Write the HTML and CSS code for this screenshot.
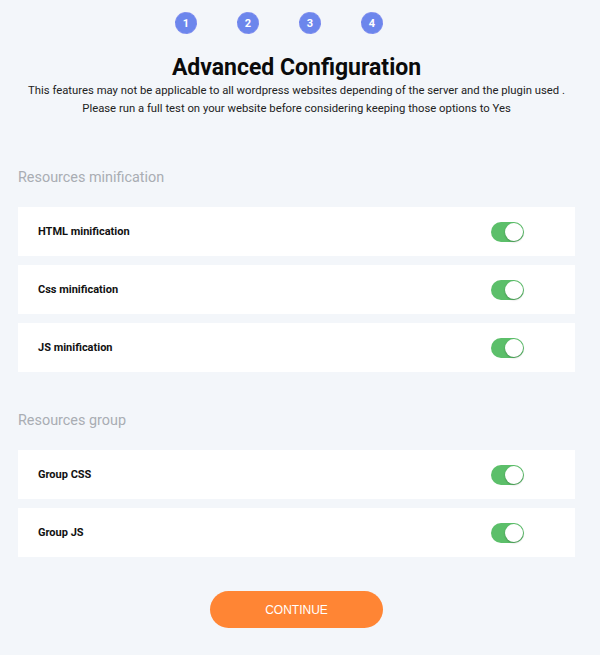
FILE: index.html
```html
<!DOCTYPE html>
<html>
<head>
<meta charset="utf-8">
<link rel="stylesheet" href="styles.css">
</head>
<body>
<div class="page">
  <div class="steps">
    <span class="step">1</span>
    <span class="step">2</span>
    <span class="step">3</span>
    <span class="step">4</span>
  </div>
  <h1 class="title">Advanced Configuration</h1>
  <p class="desc">This features may not be applicable to all wordpress websites depending of the server and the plugin used .</p>
  <p class="desc">Please run a full test on your website before considering keeping those options to Yes</p>

  <h2 class="section">Resources minification</h2>
  <div class="list">
    <div class="card"><span class="label">HTML minification</span><span class="toggle"><span class="knob"></span></span></div>
    <div class="card"><span class="label">Css minification</span><span class="toggle"><span class="knob"></span></span></div>
    <div class="card"><span class="label">JS minification</span><span class="toggle"><span class="knob"></span></span></div>
  </div>

  <h2 class="section section2">Resources group</h2>
  <div class="list">
    <div class="card"><span class="label">Group CSS</span><span class="toggle"><span class="knob"></span></span></div>
    <div class="card"><span class="label">Group JS</span><span class="toggle"><span class="knob"></span></span></div>
  </div>

  <div class="actions">
    <button class="continue">CONTINUE</button>
  </div>
</div>
</body>
</html>
```
FILE: styles.css
```css
html, body {
  margin: 0;
  padding: 0;
  background: #f3f6fa;
}
body {
  font-family: Roboto, "Liberation Sans", Arial, sans-serif;
  color: #111;
}
.page {
  width: 600px;
  height: 655px;
  box-sizing: border-box;
  padding: 12px 25px 0 18px;
}
.steps {
  display: flex;
  justify-content: flex-start;
  gap: 40px;
  padding-left: 157px;
}
.step {
  width: 22px;
  height: 22px;
  box-sizing: border-box;
  border-radius: 50%;
  background: #6c86ec;
  border: 1px dashed #8a93f0;
  color: #fff;
  font-size: 11px;
  font-weight: 700;
  display: flex;
  align-items: center;
  justify-content: center;
}
.title {
  margin: 20px 0 0;
  text-align: center;
  font-size: 23px;
  font-weight: 700;
  line-height: 28px;
  color: #0b0b0b;
}
.desc {
  margin: 0;
  text-align: center;
  font-size: 11.3px;
  line-height: 18px;
  color: #222;
  white-space: nowrap;
}
.section {
  margin: 51px 0 0;
  font-size: 14.4px;
  font-weight: 400;
  line-height: 18px;
  color: #a9adb3;
}
.section2 {
  margin-top: 40px;
}
.list {
  margin-top: 20px;
  display: flex;
  flex-direction: column;
  gap: 9px;
}
.card {
  height: 49px;
  background: #fff;
  display: flex;
  align-items: center;
  justify-content: space-between;
  padding: 0 51px 0 20px;
  box-sizing: border-box;
}
.label {
  font-size: 11px;
  font-weight: 700;
  color: #111;
}
.toggle {
  width: 33px;
  height: 20px;
  border-radius: 10px;
  background: #5cbf6a;
  display: flex;
  align-items: center;
  justify-content: flex-end;
  padding: 1px;
  box-sizing: border-box;
}
.knob {
  width: 18px;
  height: 18px;
  border-radius: 50%;
  background: #fff;
  box-shadow: 0 1px 2px rgba(0,0,0,0.25);
}
.actions {
  display: flex;
  justify-content: center;
  margin-top: 34px;
}
.continue {
  width: 173px;
  height: 37px;
  border: none;
  border-radius: 19px;
  background: #ff8534;
  color: #fff;
  font-family: "Liberation Sans", Arial, sans-serif;
  font-size: 12px;
  letter-spacing: 0;
}
```
